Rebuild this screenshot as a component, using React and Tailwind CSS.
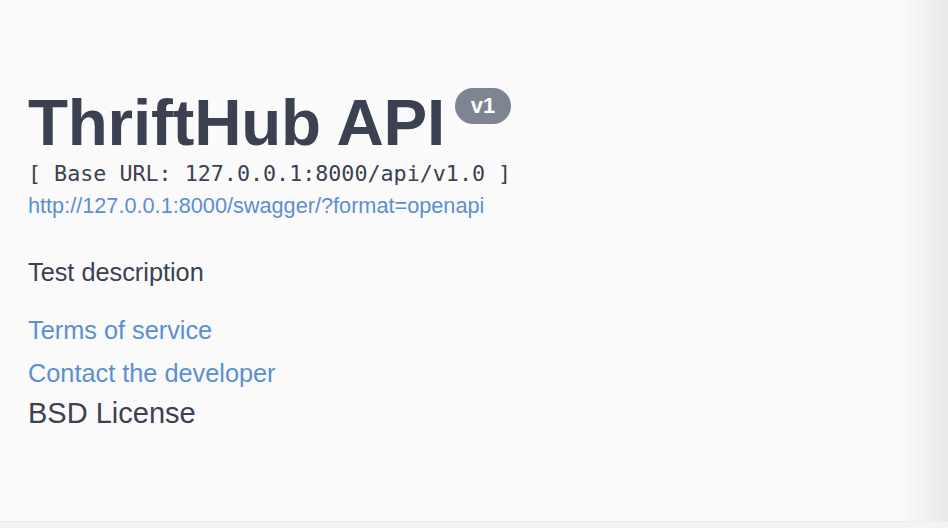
export default function App() {
  const sans = { fontFamily: '"Liberation Sans", Arial, sans-serif' };

  return (
    <div className="relative flex h-[528px] w-[948px] flex-col overflow-hidden bg-[#fafafa] text-[#3b4151]" style={sans}>
      <div className="flex flex-1">
        <div className="flex-1 pl-[28px] pt-[88px]">
          {/* Title + version badge */}
          <div className="flex items-start">
            <h1 className="mt-[2px] text-[65.5px] font-bold leading-[65px] tracking-[-0.2px]">ThriftHub API</h1>
            <span className="ml-[10px] inline-flex h-[36px] w-[56px] items-center justify-center rounded-full bg-[#7d8492] text-[22px] font-bold leading-none text-white">
              v1
            </span>
          </div>
          <p className="mt-[6px] text-[21.7px] leading-[26px]" style={{ fontFamily: '"DejaVu Sans Mono", "Liberation Mono", monospace' }}>
            [ Base URL: 127.0.0.1:8000/api/v1.0 ]
          </p>
          <a href="#" className="mt-[6px] block text-[21.7px] leading-[26px] text-[#5b8fd3]">
            http://127.0.0.1:8000/swagger/?format=openapi
          </a>

          <p className="mt-[38px] text-[25.3px] leading-[30px]">Test description</p>

          <a href="#" className="mt-[28px] block text-[25.3px] leading-[30px] text-[#5b8fd3]">Terms of service</a>
          <a href="#" className="mt-[13px] block text-[25.3px] leading-[30px] text-[#5b8fd3]">Contact the developer</a>
          <p className="mt-[8px] text-[29px] leading-[34px]">BSD License</p>
        </div>
        {/* right edge shade */}
        <div className="w-[48px] bg-gradient-to-r from-[#fafafa] to-[#e9e9e9]" />
      </div>
      <div className="h-[7px] border-t border-[#ececec] bg-[#f3f3f3]" />
    </div>
  );
}
